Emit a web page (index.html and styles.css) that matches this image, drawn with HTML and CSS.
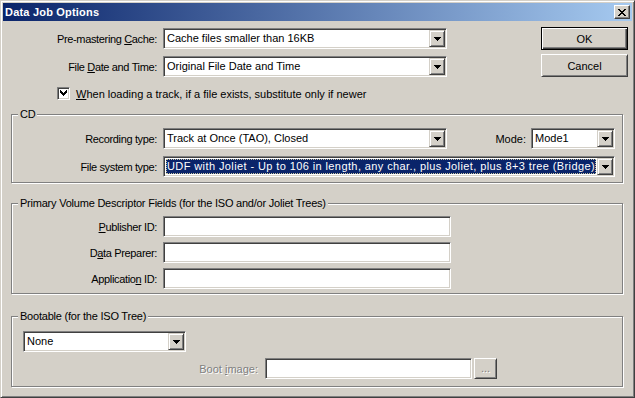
FILE: index.html
```html
<!DOCTYPE html>
<html>
<head>
<meta charset="utf-8">
<link rel="stylesheet" href="styles.css">
</head>
<body>
<div class="window">
  <div class="titlebar">
    <span class="title">Data Job Options</span>
    <span class="close"><svg width="8" height="7" viewBox="0 0 8 7" shape-rendering="crispEdges"><path d="M0 0h2v1h-2zM6 0h2v1h-2zM1 1h2v1h-2zM5 1h2v1h-2zM2 2h4v1h-4zM3 3h2v1h-2zM2 4h4v1h-4zM1 5h2v1h-2zM5 5h2v1h-2zM0 6h2v1h-2zM6 6h2v1h-2z" fill="#000"/></svg></span>
  </div>
  <div class="client">
    <div class="top">
      <div class="topform">
        <div class="row">
          <span class="lbl lbl-top">Pre-mastering <u>C</u>ache:</span>
          <div class="combo w284"><span class="val">Cache files smaller than 16KB</span><span class="drop"><svg width="7" height="4" viewBox="0 0 7 4" shape-rendering="crispEdges"><path d="M0 0h7v1h-7zM1 1h5v1h-5zM2 2h3v1h-3zM3 3h1v1h-1z" fill="#000"/></svg></span></div>
        </div>
        <div class="row gap7">
          <span class="lbl lbl-top">File <u>D</u>ate and Time:</span>
          <div class="combo w284"><span class="val">Original File Date and Time</span><span class="drop"><svg width="7" height="4" viewBox="0 0 7 4" shape-rendering="crispEdges"><path d="M0 0h7v1h-7zM1 1h5v1h-5zM2 2h3v1h-3zM3 3h1v1h-1z" fill="#000"/></svg></span></div>
        </div>
        <div class="check-row">
          <span class="checkbox"><svg width="7" height="7" viewBox="0 0 7 7" shape-rendering="crispEdges"><path d="M6 0h1v3h-1zM5 1h1v3h-1zM4 2h1v3h-1zM3 3h1v3h-1zM2 2h1v3h-1zM1 1h1v3h-1zM0 0h1v3h-1z" fill="#000"/></svg></span>
          <span class="txt"><u>W</u>hen loading a track, if a file exists, substitute only if newer</span>
        </div>
      </div>
      <div class="buttons">
        <div class="btn default">OK</div>
        <div class="btn">Cancel</div>
      </div>
    </div>

    <div class="group g-cd">
      <span class="legend">CD</span>
      <div class="row gap7 pr7">
        <span class="lbl">Recording type:</span>
        <div class="combo w284"><span class="val">Track at Once (TAO), Closed</span><span class="drop"><svg width="7" height="4" viewBox="0 0 7 4" shape-rendering="crispEdges"><path d="M0 0h7v1h-7zM1 1h5v1h-5zM2 2h3v1h-3zM3 3h1v1h-1z" fill="#000"/></svg></span></div>
        <span class="lbl-mode">Mode:</span>
        <div class="combo w84"><span class="val">Mode1</span><span class="drop"><svg width="7" height="4" viewBox="0 0 7 4" shape-rendering="crispEdges"><path d="M0 0h7v1h-7zM1 1h5v1h-5zM2 2h3v1h-3zM3 3h1v1h-1z" fill="#000"/></svg></span></div>
      </div>
      <div class="row gap7 pr7">
        <span class="lbl">File system type:</span>
        <div class="combo w452"><span class="val sel">UDF with Joliet - Up to 106 in length, any char., plus Joliet, plus 8+3 tree (Bridge)</span><span class="drop"><svg width="7" height="4" viewBox="0 0 7 4" shape-rendering="crispEdges"><path d="M0 0h7v1h-7zM1 1h5v1h-5zM2 2h3v1h-3zM3 3h1v1h-1z" fill="#000"/></svg></span></div>
      </div>
    </div>

    <div class="group g-pvd">
      <span class="legend">Primary Volume Descriptor Fields (for the ISO and/or Joliet Trees)</span>
      <div class="row first6">
        <span class="lbl"><u>P</u>ublisher ID:</span>
        <div class="field w288"></div>
      </div>
      <div class="row gap5">
        <span class="lbl">D<u>a</u>ta Preparer:</span>
        <div class="field w288"></div>
      </div>
      <div class="row gap5">
        <span class="lbl">Applicatio<u>n</u> ID:</span>
        <div class="field w288"></div>
      </div>
    </div>

    <div class="group g-boot">
      <span class="legend">Bootable (for the ISO Tree)</span>
      <div class="row first8 boot-combo-row">
        <div class="combo w163"><span class="val">None</span><span class="drop"><svg width="7" height="4" viewBox="0 0 7 4" shape-rendering="crispEdges"><path d="M0 0h7v1h-7zM1 1h5v1h-5zM2 2h3v1h-3zM3 3h1v1h-1z" fill="#000"/></svg></span></div>
      </div>
      <div class="row gap6 boot-row">
        <span class="lbl-boot disabled">Boot <u>i</u>mage:</span>
        <div class="field w207"></div>
        <div class="btn small disabled">...</div>
      </div>
    </div>
  </div>
</div>
</body>
</html>
```

FILE: styles.css
```css
* { box-sizing: border-box; }
html, body { margin: 0; padding: 0; }
body {
  width: 635px;
  height: 398px;
  background: #D4D0C8;
  font-family: "Liberation Sans", Arial, sans-serif;
  font-size: 11px;
  color: #000;
  overflow: hidden;
}
u { text-decoration: underline; text-underline-offset: 1px; }

.window {
  width: 635px;
  height: 398px;
  background: #D4D0C8;
  border: 1px solid;
  border-color: #D4D0C8 #404040 #404040 #D4D0C8;
  box-shadow: inset 1px 1px 0 #fff, inset -1px -1px 0 #808080;
  padding: 2px;
  display: flex;
  flex-direction: column;
}

.titlebar {
  height: 18px;
  background: linear-gradient(to right, #0A246A 0%, #A6CAF0 100%);
  display: flex;
  align-items: center;
  justify-content: space-between;
  padding: 0 2px 0 2px;
  flex: none;
}
.title {
  color: #fff;
  font-weight: bold;
  font-size: 11px;
  letter-spacing: 0.2px;
}
.close {
  width: 16px;
  height: 14px;
  background: #D4D0C8;
  border: 1px solid;
  border-color: #fff #404040 #404040 #fff;
  box-shadow: inset -1px -1px 0 #808080;
  display: flex;
  align-items: center;
  justify-content: center;
  padding-right: 1px;
}

.client {
  flex: 1;
  display: flex;
  flex-direction: column;
}

.top {
  display: flex;
  justify-content: space-between;
  align-items: flex-start;
  padding-top: 6px;
}
.topform { padding-top: 1px; }
.buttons {
  display: flex;
  flex-direction: column;
  gap: 4px;
  margin-right: 4px;
}

.row {
  display: flex;
  align-items: center;
  height: 21px;
}
.gap7 { margin-top: 7px; }
.gap5 { margin-top: 5px; }
.gap6 { margin-top: 6px; }
.first6 { margin-top: 6px; }
.first8 { margin-top: 8px; }
.pr7 { padding-right: 7px; }

.lbl {
  width: 145px;
  text-align: right;
  margin-right: 6px;
  white-space: nowrap;
  flex: none;
  letter-spacing: -0.35px;
}
.lbl-top { width: 154px; }
.lbl-mode { margin-left: auto; margin-right: 5px; }

.combo {
  height: 21px;
  background: #fff;
  border: 1px solid;
  border-color: #808080 #fff #fff #808080;
  box-shadow: inset 1px 1px 0 #404040, inset -1px -1px 0 #D4D0C8;
  padding: 1px;
  display: flex;
  flex: none;
}
.val {
  flex: 1;
  line-height: 17px;
  padding-left: 2px;
  white-space: nowrap;
  overflow: hidden;
}
.val.sel {
  margin: 1px;
  line-height: 15px;
  padding-left: 1px;
  background: #0A246A;
  color: #fff;
  outline: 1px dotted #C8C4A0;
  outline-offset: -1px;
  letter-spacing: 0.4px;
}
.drop {
  width: 16px;
  height: 17px;
  flex: none;
  background: #D4D0C8;
  border: 1px solid;
  border-color: #D4D0C8 #404040 #404040 #D4D0C8;
  box-shadow: inset 1px 1px 0 #fff, inset -1px -1px 0 #808080;
  display: flex;
  align-items: center;
  justify-content: center;
}
.w284 { width: 284px; }
.w84 { width: 84px; }
.w452 { width: 452px; }
.w163 { width: 163px; }
.w288 { width: 288px; }
.w207 { width: 207px; }

.field {
  height: 21px;
  background: #fff;
  border: 1px solid;
  border-color: #808080 #fff #fff #808080;
  box-shadow: inset 1px 1px 0 #404040, inset -1px -1px 0 #D4D0C8;
  flex: none;
}

.check-row {
  display: flex;
  align-items: center;
  height: 13px;
  margin-top: 10px;
  margin-left: 54px;
}
.checkbox {
  width: 13px;
  height: 13px;
  background: #fff;
  border: 1px solid;
  border-color: #808080 #fff #fff #808080;
  box-shadow: inset 1px 1px 0 #404040, inset -1px -1px 0 #D4D0C8;
  display: flex;
  align-items: center;
  justify-content: center;
  margin-right: 6px;
  flex: none;
}
.txt { white-space: nowrap; }

.btn {
  width: 87px;
  height: 23px;
  background: #D4D0C8;
  border: 1px solid;
  border-color: #fff #404040 #404040 #fff;
  box-shadow: inset 1px 1px 0 #D4D0C8, inset -1px -1px 0 #808080;
  display: flex;
  align-items: center;
  justify-content: center;
}
.btn.default {
  border: 1px solid #000;
  box-shadow: inset 1px 1px 0 #fff, inset -1px -1px 0 #404040, inset -2px -2px 0 #808080;
}
.btn.small {
  width: 23px;
  height: 21px;
  margin-left: 2px;
  padding-bottom: 2px;
}

.group {
  width: 612px;
  margin-left: 8px;
  border: 1px solid #808080;
  box-shadow: inset 1px 1px 0 #fff, 1px 1px 0 #fff;
}
.legend {
  display: table;
  margin: -7px 0 0 6px;
  padding: 0 2px;
  line-height: 13px;
  background: #D4D0C8;
  white-space: nowrap;
  letter-spacing: -0.22px;
}
.g-cd { margin-top: 14px; padding-bottom: 5px; }
.g-pvd { margin-top: 20px; padding-bottom: 4px; }
.g-boot { margin-top: 22px; padding-bottom: 7px; }

.boot-combo-row { padding-left: 11px; }
.boot-row { padding-left: 146px; }
.lbl-boot {
  width: 100px;
  text-align: right;
  margin-right: 7px;
  white-space: nowrap;
}
.disabled {
  color: #808080;
  text-shadow: 1px 1px 0 #fff;
}
```
